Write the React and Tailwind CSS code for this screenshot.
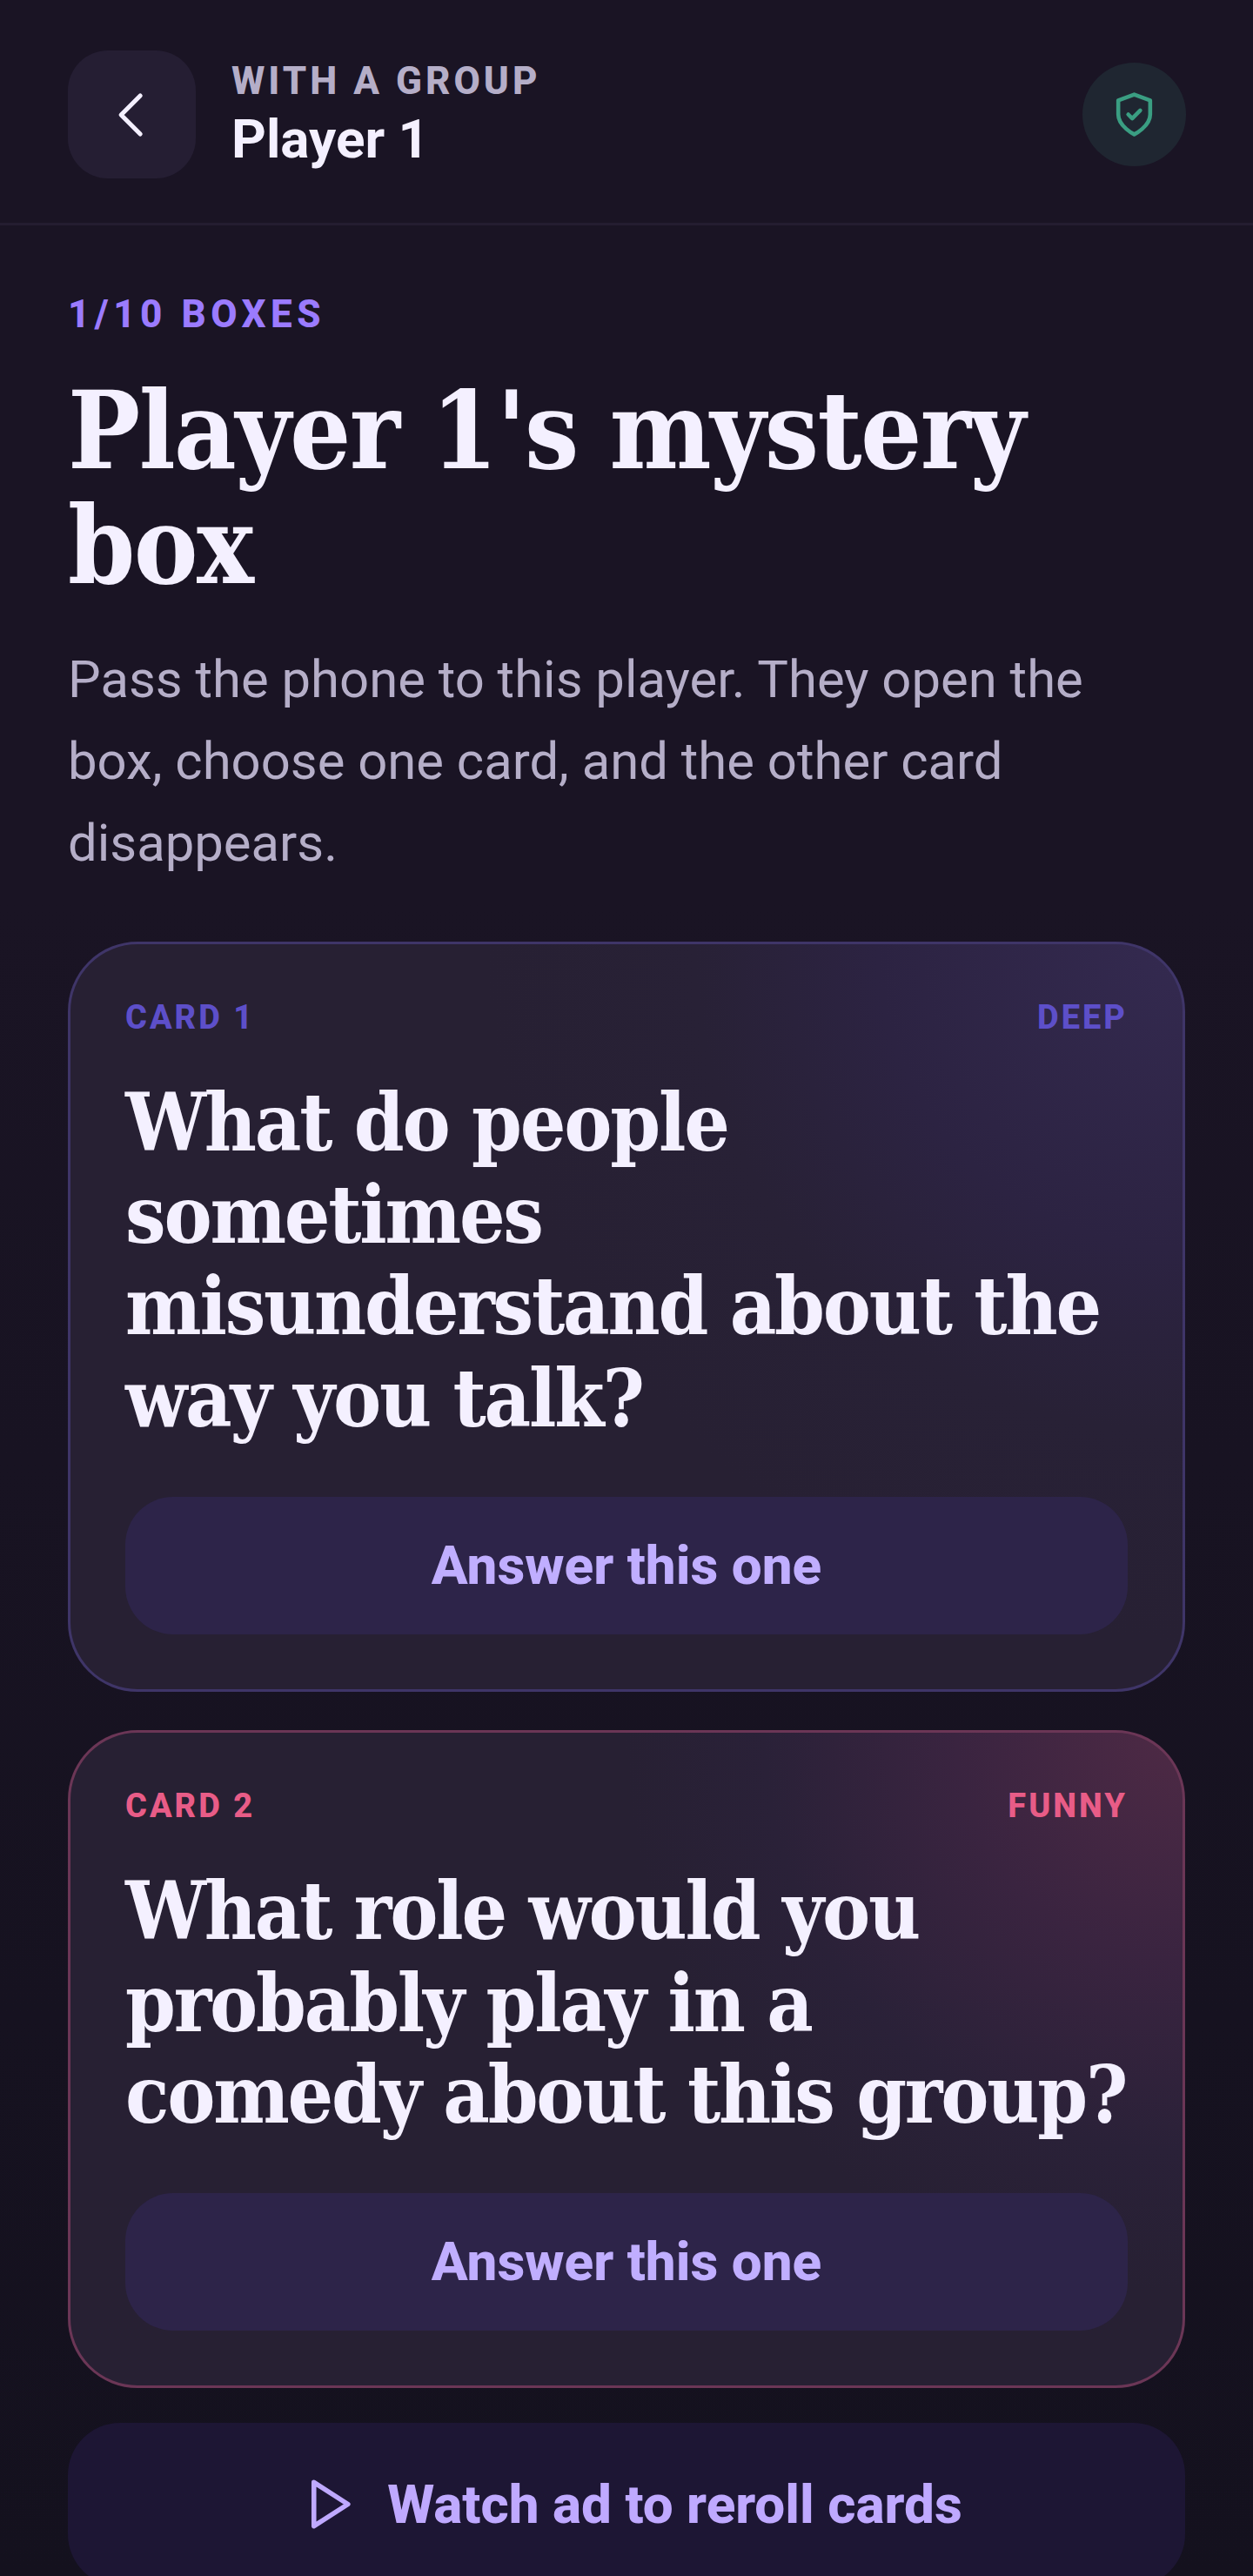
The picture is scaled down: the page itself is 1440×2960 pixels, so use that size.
import React from "react";

const cards = [
  {
    id: 1,
    label: "CARD 1",
    tag: "DEEP",
    question: "What do people sometimes misunderstand about the way you talk?",
    cardClass:
      "border-[#3f3568] bg-[radial-gradient(circle_at_100%_0%,#342a50_0px,#2c2342_350px,#282136_560px,#272033_800px)]",
    labelClass: "text-[#5d4fc9]",
  },
  {
    id: 2,
    label: "CARD 2",
    tag: "FUNNY",
    question: "What role would you probably play in a comedy about this group?",
    cardClass:
      "border-[#6b3656] bg-[radial-gradient(circle_at_100%_0%,#4e2a45_0px,#3a2440_260px,#2a2138_480px,#272033_640px)]",
    labelClass: "text-[#e85c87]",
  },
];

const QuestionCard = ({ card }) => (
  <div
    className={`rounded-[80px] border-[3px] px-[63px] pt-[60px] pb-[63px] ${card.cardClass}`}
  >
    <div
      className={`flex justify-between text-[38px] leading-[48px] font-extrabold tracking-[3px] ${card.labelClass}`}
    >
      <span>{card.label}</span>
      <span>{card.tag}</span>
    </div>
    <h2 className="mt-[45px] font-['DejaVu_Serif_Condensed','DejaVu_Serif',serif] text-[92px] leading-[105.7px] font-bold tracking-[-2.2px] text-[#f4f0ff]">
      {card.question}
    </h2>
    <button className="mt-[59px] h-[158px] w-full rounded-[55px] bg-[#2d2449] text-[62px] font-extrabold text-[#c0aeff]">
      Answer this one
    </button>
  </div>
);

const App = () => {
  return (
    <div className="h-[2960px] overflow-hidden bg-[linear-gradient(180deg,#1a1424_0%,#1a1424_35%,#14111e_100%)] font-['Roboto',sans-serif]">
      {/* Header */}
      <header className="flex h-[259px] items-start justify-between border-b-[3px] border-[#241d30] pt-[58px] pr-[77px] pl-[78px]">
        <div className="flex items-center gap-[41px]">
          <button className="flex h-[147px] w-[147px] items-center justify-center rounded-[46px] bg-[#251e33]">
            <svg width="88" height="88" viewBox="0 0 24 24" fill="none" stroke="#f4f0ff" strokeWidth="1.4" strokeLinecap="round" strokeLinejoin="round">
              <path d="m14.5 6-6 6 6 6" />
            </svg>
          </button>
          <div className="flex flex-col gap-[6px]">
            <div className="text-[44px] leading-[50px] font-extrabold tracking-[4px] text-[#b5aec8]">
              WITH A GROUP
            </div>
            <div className="text-[62px] leading-[72px] font-bold text-[#f4f0ff]">
              Player 1
            </div>
          </div>
        </div>
        <div className="mt-[14px] flex h-[119px] w-[119px] items-center justify-center rounded-full bg-[#1f2631]">
          <svg width="55" height="55" viewBox="0 0 24 24" fill="none" stroke="#3a9e82" strokeWidth="2" strokeLinecap="round" strokeLinejoin="round">
            <path d="M12 22s8-4 8-10V5l-8-3-8 3v7c0 6 8 10 8 10z" />
            <path d="m9 12 2 2 4-4" />
          </svg>
        </div>
      </header>

      {/* Intro */}
      <main className="px-[78px] pt-[75px]">
        <div className="text-[44px] leading-[54px] font-extrabold tracking-[5.5px] text-[#9b7bff]">
          1/10 BOXES
        </div>
        <h1 className="mt-[41px] font-['DejaVu_Serif_Condensed','DejaVu_Serif',serif] text-[123px] leading-[132px] font-bold tracking-[-1.6px] text-[#f4f0ff]">
          Player 1's mystery box
        </h1>
        <p className="mt-[41px] max-w-[1260px] text-[59.8px] leading-[94px] text-[#b5aec8]">
          Pass the phone to this player. They open the box, choose one card, and the other card disappears.
        </p>

        {/* Cards */}
        <div className="mt-[66px] flex flex-col gap-[44px]">
          {cards.map((card) => (
            <QuestionCard key={card.id} card={card} />
          ))}
        </div>

        {/* Reroll */}
        <button className="mt-[40px] flex h-[188px] w-full items-center justify-center gap-[34px] rounded-[60px] bg-[#1d1634] pl-[10px] text-[62px] font-extrabold text-[#bfa9ff]">
          <svg width="67" height="67" viewBox="0 0 24 24" fill="none" stroke="#bfa9ff" strokeWidth="2" strokeLinecap="round" strokeLinejoin="round">
            <polygon points="6 3 20 12 6 21 6 3" />
          </svg>
          Watch ad to reroll cards
        </button>
      </main>
    </div>
  );
};

export default App;
